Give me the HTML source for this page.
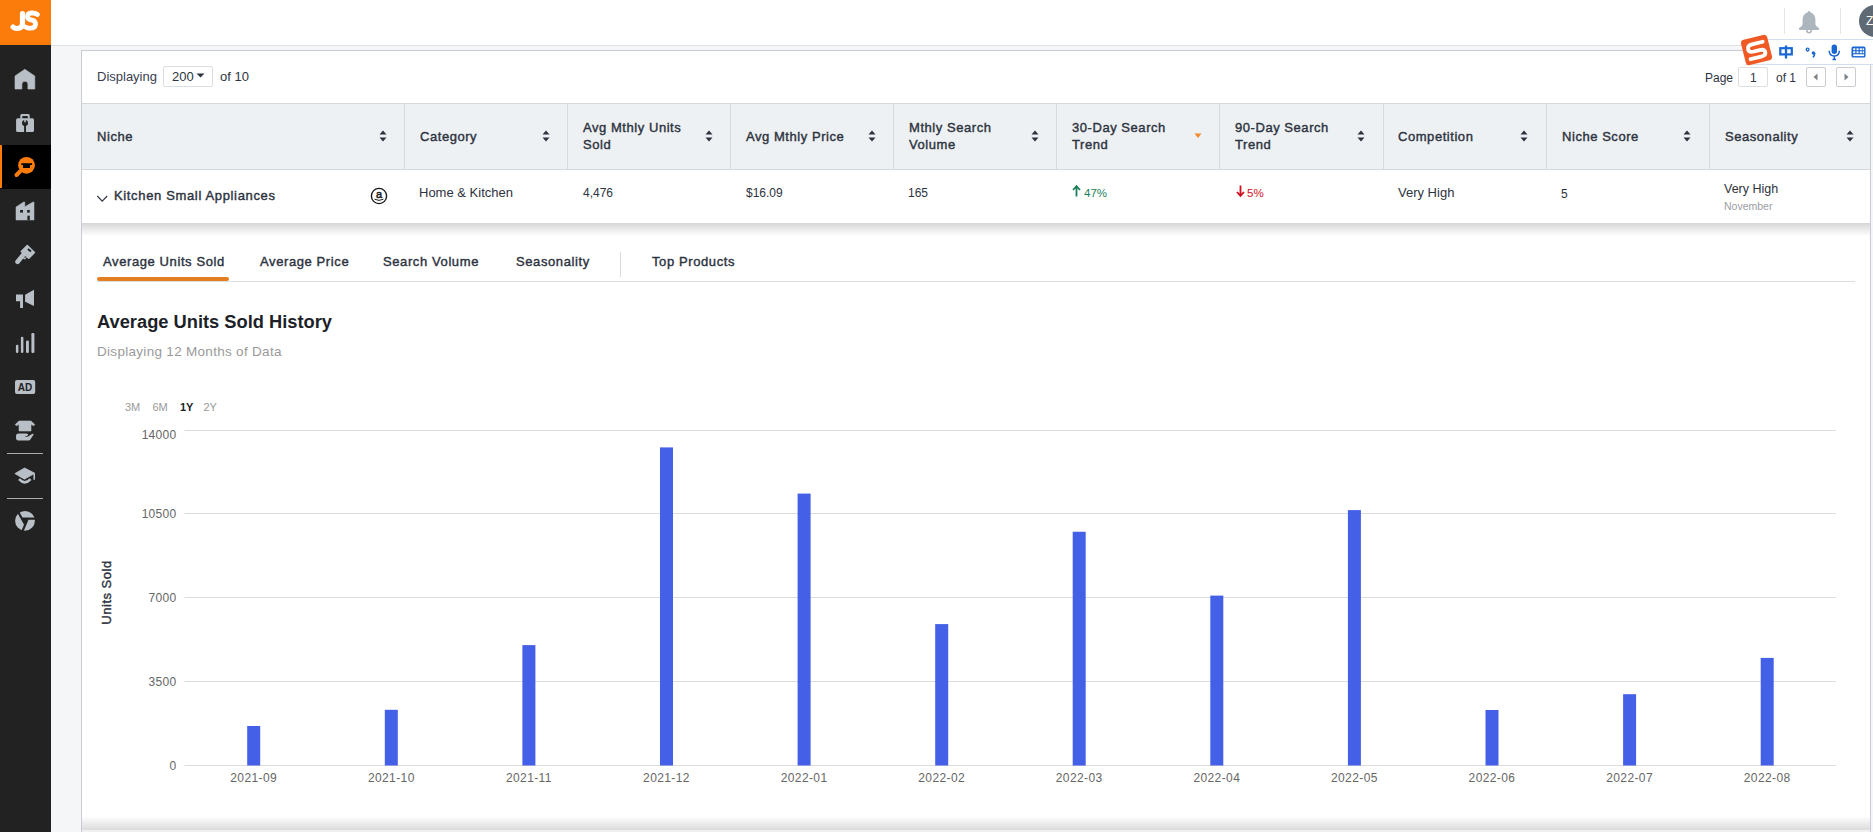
<!DOCTYPE html>
<html><head><meta charset="utf-8">
<style>
*{margin:0;padding:0;box-sizing:border-box}
html,body{width:1873px;height:832px;overflow:hidden;background:#f4f6f8;font-family:"Liberation Sans",sans-serif;color:#2b3140}
.A{position:absolute;white-space:nowrap}
.hd{position:absolute;font-size:13px;font-weight:400;-webkit-text-stroke:0.4px #2d3340;letter-spacing:0.55px;color:#2d3340;line-height:17px;white-space:nowrap}
.md{font-weight:400!important;-webkit-text-stroke:0.4px #2d3340;letter-spacing:0.6px}
.c{position:absolute;font-size:13px;color:#2d3340;white-space:nowrap;line-height:15px}
.vl{position:absolute;top:104px;width:1px;height:65px;background:#d8dbde}
svg{position:absolute;overflow:visible}
</style></head><body>

<div class="A" style="left:0;top:0;width:51px;height:832px;background:#222222"></div>
<div class="A" style="left:0;top:0;width:51px;height:45px;background:#fb7c0a"></div>
<svg style="left:0;top:0" width="51" height="45" viewBox="0 0 51 45"><path d="M22.5 13.5 V23.5 Q22.5 28.5 17 28.5 Q14.5 28.5 13 27" fill="none" stroke="#fff" stroke-width="5.2" stroke-linecap="round"/><path d="M37.5 14.5 Q35 12.8 31.5 13 Q27.5 13.2 27.5 16.5 Q27.5 19.3 32 20.2 Q35.5 21 35.5 24 Q35.5 28.2 30 28.2 Q27.5 28.2 25.5 27" fill="none" stroke="#fff" stroke-width="4.8" stroke-linecap="round" stroke-linejoin="round"/></svg>
<div class="A" style="left:0;top:145px;width:51px;height:44px;background:#000"></div>
<div class="A" style="left:0;top:145px;width:2px;height:43px;background:#fb7c0a"></div>
<svg style="left:0;top:0" width="51" height="560" viewBox="0 0 51 560"><path d="M24.8 69.3 L34.8 76 V89 H27.9 V84.3 A3 3 0 0 0 21.9 84.3 V89 H15 V76 Z" fill="#b8bfc6" stroke="#b8bfc6" stroke-width="0.6" stroke-linejoin="round"/><path d="M21.8 114 H28.2 Q29.7 114 29.7 115.5 V118.5 H27.8 V116 H22.3 V118.5 H20.3 V115.5 Q20.3 114 21.8 114Z" fill="#b8bfc6"/><rect x="16.1" y="118.3" width="17.9" height="13.7" rx="1.6" fill="#b8bfc6"/><circle cx="25" cy="123" r="3" fill="#222222"/><rect x="24.2" y="119.3" width="1.6" height="3" fill="#b8bfc6"/><rect x="24.1" y="124" width="1.9" height="8.2" fill="#222222"/><path d="M16 220 V207 L23.6 202 H24.8 V206.8 L33 202 H34 V220 Z" fill="#b8bfc6" stroke="#b8bfc6" stroke-width="0.5" stroke-linejoin="round"/><rect x="20.1" y="210" width="2.9" height="2.6" fill="#222222"/><rect x="27.1" y="210" width="2.7" height="2.6" fill="#222222"/><rect x="27.4" y="215.7" width="2.4" height="4.5" fill="#222222"/><path d="M27.3 245.6 L34.4 252.5 L28.75 258.2 L21.3 251.5 Z" fill="#b8bfc6" stroke="#b8bfc6" stroke-width="1.6" stroke-linejoin="round"/><path d="M23.5 254.5 L17.6 261.8" stroke="#b8bfc6" stroke-width="4.6" stroke-linecap="round"/><path d="M22 258 L25 259.6 L27 257.2 Z" fill="#b8bfc6"/><path d="M27.9 249 L31 251.6" stroke="#222222" stroke-width="1.9"/><path d="M16 294.5 H23 V308 H20.1 V301.3 H16 Z" fill="#b8bfc6"/><path d="M25.1 294.8 L34 289.8 V306 L25.1 301.7 Z" fill="#b8bfc6"/><rect x="15.9" y="344.8" width="2.5" height="8.2" rx="1.2" fill="#b8bfc6"/><rect x="20.9" y="336.8" width="2.5" height="16.2" rx="1.2" fill="#b8bfc6"/><rect x="26" y="340.6" width="2.9" height="12.4" rx="1.2" fill="#b8bfc6"/><rect x="31.4" y="333" width="3.0" height="20.0" rx="1.2" fill="#b8bfc6"/><rect x="15" y="380.1" width="20.2" height="13.9" rx="2" fill="#b8bfc6"/><text x="25.1" y="391" text-anchor="middle" font-family="Liberation Sans" font-weight="700" font-size="10" fill="#222222">AD</text><path d="M15.2 424.6 L19 421 H31 L34.8 424.6 L33.6 425.8 L31 424.2 V431 H19 V424.2 L16.4 425.8 Z" fill="#b8bfc6" stroke="#b8bfc6" stroke-width="0.6" stroke-linejoin="round"/><path d="M18.5 433.5 H26.5 Q28.6 433.6 27.8 435.6 L24.5 436.8 H27.6 L32 434 Q33.8 433.2 33.5 434.8 L30.2 439.8 Q29.7 440.4 28.8 440.4 H18.3 Q16 440.4 16 437.5 V436 Q16 433.5 18.5 433.5Z" fill="#b8bfc6"/><rect x="7" y="453" width="36" height="1" fill="#a9acb0"/><rect x="7" y="498" width="36" height="1" fill="#a9acb0"/><path d="M24.6 468 L34.9 473.3 L24.4 479.2 L14.9 473.6 Z" fill="#b8bfc6" stroke="#b8bfc6" stroke-width="0.8" stroke-linejoin="round"/><path d="M34.2 473.5 V479.8" stroke="#b8bfc6" stroke-width="1.6"/><path d="M19 479.2 Q24.8 485.5 30.6 479.2" fill="none" stroke="#b8bfc6" stroke-width="2.6"/><circle cx="25" cy="520.8" r="9.9" fill="#b8bfc6"/><path d="M21.9 518.6 H27.7 L25.1 524.2Z" fill="#222222"/><path d="M18.3 512.2 L25.3 524.8 M21.9 518.6 H35.5 M27.9 518.4 L22.4 531.2" stroke="#222222" stroke-width="2.2"/></svg>
<svg style="left:0;top:140px" width="51" height="50" viewBox="0 140 51 50"><circle cx="26.5" cy="165.3" r="8.4" fill="#fb7c0a"/><path d="M20 171.5 L16.5 175" stroke="#fb7c0a" stroke-width="4" stroke-linecap="round"/><path d="M21.3 163.3 H32 V165.1 H30 V168 H23 V165.1 H21.3Z" fill="#000"/></svg>
<div class="A" style="left:51px;top:0;width:1822px;height:46px;background:#fff;border-bottom:1px solid #dfe2e5"></div>
<div class="A" style="left:1784px;top:8px;width:1px;height:26px;background:#e3e5e8"></div>
<div class="A" style="left:1840px;top:8px;width:1px;height:26px;background:#e3e5e8"></div>
<svg style="left:1795px;top:8px" width="28" height="28" viewBox="1795 8 28 28"><path d="M1809 11 Q1810.3 11 1810.6 12.6 Q1815.3 14 1815.4 19.5 V24.2 Q1815.6 26 1817.5 27 Q1819.4 28 1819.2 29 Q1819 30 1817.5 30 H1800.5 Q1799 30 1798.8 29 Q1798.6 28 1800.5 27 Q1802.4 26 1802.6 24.2 V19.5 Q1802.7 14 1807.4 12.6 Q1807.7 11 1809 11Z" fill="#adb5bd"/><circle cx="1809" cy="30.6" r="2.2" fill="none" stroke="#adb5bd" stroke-width="1.6"/></svg>
<div class="A" style="left:1859px;top:5px;width:32px;height:32px;border-radius:50%;background:#5f6a75"></div>
<div class="A" style="left:1866px;top:14px;font-size:12px;color:#fff;line-height:14px">Z</div>
<div class="A" style="left:81px;top:50px;width:1790px;height:800px;background:#fff;border:1px solid #c9ccd0"></div>
<div class="c" style="left:97px;top:69px;color:#3a4050">Displaying</div>
<div class="A" style="left:163px;top:66px;width:50px;height:21px;border:1px solid #dcdfe2;border-radius:2px"></div>
<div class="c" style="left:172px;top:69px">200</div>
<svg style="left:196px;top:73px" width="9" height="5" viewBox="0 0 9 5"><path d="M0.5 0.5 H8.5 L4.5 4.5Z" fill="#2d3340"/></svg>
<div class="c" style="left:220px;top:69px">of 10</div>
<div class="c" style="left:1705px;top:71px;font-size:12px">Page</div>
<div class="A" style="left:1738px;top:67px;width:30px;height:20px;border:1px solid #dcdfe2;border-radius:2px"></div>
<div class="c" style="left:1750px;top:71px;font-size:12px">1</div>
<div class="c" style="left:1776px;top:71px;font-size:12px">of 1</div>
<div class="A" style="left:1806px;top:67px;width:20px;height:20px;border:1px solid #c9ccd0;border-radius:2px"></div>
<svg style="left:1813px;top:73px" width="5" height="8" viewBox="0 0 5 8"><path d="M4.5 0.5 V7.5 L0.5 4Z" fill="#7c8188"/></svg>
<div class="A" style="left:1836px;top:67px;width:20px;height:20px;border:1px solid #c9ccd0;border-radius:2px"></div>
<svg style="left:1844px;top:73px" width="5" height="8" viewBox="0 0 5 8"><path d="M0.5 0.5 V7.5 L4.5 4Z" fill="#7c8188"/></svg>
<div class="A" style="left:82px;top:103px;width:1788px;height:67px;background:#eef1f3;border-top:1px solid #d5d8db;border-bottom:1px solid #d5d8db"></div>
<div class="vl" style="left:404px"></div>
<div class="vl" style="left:567px"></div>
<div class="vl" style="left:730px"></div>
<div class="vl" style="left:893px"></div>
<div class="vl" style="left:1056px"></div>
<div class="vl" style="left:1219px"></div>
<div class="vl" style="left:1383px"></div>
<div class="vl" style="left:1546px"></div>
<div class="vl" style="left:1709px"></div>
<div class="hd" style="left:97px;top:128px">Niche</div>
<div class="hd" style="left:420px;top:128px">Category</div>
<div class="hd" style="left:583px;top:119px">Avg Mthly Units<br>Sold</div>
<div class="hd" style="left:746px;top:128px">Avg Mthly Price</div>
<div class="hd" style="left:909px;top:119px">Mthly Search<br>Volume</div>
<div class="hd" style="left:1072px;top:119px">30-Day Search<br>Trend</div>
<div class="hd" style="left:1235px;top:119px">90-Day Search<br>Trend</div>
<div class="hd" style="left:1398px;top:128px">Competition</div>
<div class="hd" style="left:1562px;top:128px">Niche Score</div>
<div class="hd" style="left:1725px;top:128px">Seasonality</div>
<svg style="left:379px;top:130px" width="8" height="12" viewBox="0 0 8 12"><path d="M4 0.5 L7.5 4.5 H0.5Z M4 11.5 L7.5 7.5 H0.5Z" fill="#2d3340"/></svg>
<svg style="left:542px;top:130px" width="8" height="12" viewBox="0 0 8 12"><path d="M4 0.5 L7.5 4.5 H0.5Z M4 11.5 L7.5 7.5 H0.5Z" fill="#2d3340"/></svg>
<svg style="left:705px;top:130px" width="8" height="12" viewBox="0 0 8 12"><path d="M4 0.5 L7.5 4.5 H0.5Z M4 11.5 L7.5 7.5 H0.5Z" fill="#2d3340"/></svg>
<svg style="left:868px;top:130px" width="8" height="12" viewBox="0 0 8 12"><path d="M4 0.5 L7.5 4.5 H0.5Z M4 11.5 L7.5 7.5 H0.5Z" fill="#2d3340"/></svg>
<svg style="left:1031px;top:130px" width="8" height="12" viewBox="0 0 8 12"><path d="M4 0.5 L7.5 4.5 H0.5Z M4 11.5 L7.5 7.5 H0.5Z" fill="#2d3340"/></svg>
<svg style="left:1357px;top:130px" width="8" height="12" viewBox="0 0 8 12"><path d="M4 0.5 L7.5 4.5 H0.5Z M4 11.5 L7.5 7.5 H0.5Z" fill="#2d3340"/></svg>
<svg style="left:1520px;top:130px" width="8" height="12" viewBox="0 0 8 12"><path d="M4 0.5 L7.5 4.5 H0.5Z M4 11.5 L7.5 7.5 H0.5Z" fill="#2d3340"/></svg>
<svg style="left:1683px;top:130px" width="8" height="12" viewBox="0 0 8 12"><path d="M4 0.5 L7.5 4.5 H0.5Z M4 11.5 L7.5 7.5 H0.5Z" fill="#2d3340"/></svg>
<svg style="left:1846px;top:130px" width="8" height="12" viewBox="0 0 8 12"><path d="M4 0.5 L7.5 4.5 H0.5Z M4 11.5 L7.5 7.5 H0.5Z" fill="#2d3340"/></svg>
<svg style="left:1194px;top:133px" width="8" height="6" viewBox="0 0 8 6"><path d="M0.5 0.5 H7.5 L4 5Z" fill="#f0892c"/></svg>
<svg style="left:96px;top:195px" width="12" height="8" viewBox="0 0 12 8"><path d="M1.3 1 L6.2 6.2 L11.2 1" fill="none" stroke="#2d3340" stroke-width="1.1"/></svg>
<div class="c md" style="left:114px;top:188px;letter-spacing:0.65px">Kitchen Small Appliances</div>
<svg style="left:370px;top:187px" width="18" height="18" viewBox="0 0 18 18"><circle cx="9" cy="9" r="7.6" fill="none" stroke="#1a1a1a" stroke-width="1.4"/><text x="9" y="10.8" text-anchor="middle" font-family="Liberation Sans" font-weight="400" stroke="#1a1a1a" stroke-width="0.5" font-size="11" fill="#1a1a1a">a</text><path d="M4.6 12.2 Q9 14.6 13.4 12.2" fill="none" stroke="#1a1a1a" stroke-width="1"/></svg>
<div class="c" style="left:419px;top:185px">Home &amp; Kitchen</div>
<div class="c" style="left:583px;top:186px;font-size:12px">4,476</div>
<div class="c" style="left:746px;top:186px;font-size:12px">$16.09</div>
<div class="c" style="left:908px;top:186px;font-size:12px">165</div>
<svg style="left:1072px;top:185px" width="9" height="12" viewBox="0 0 9 12"><path d="M4.5 11.5 V1.5 M1 5 L4.5 1.2 L8 5" fill="none" stroke="#1b7f5a" stroke-width="1.8"/></svg>
<div class="c" style="left:1084px;top:186px;font-size:11.5px;color:#1b7f5a">47%</div>
<svg style="left:1236px;top:185px" width="9" height="12" viewBox="0 0 9 12"><path d="M4.5 0.5 V10.5 M1 7 L4.5 10.8 L8 7" fill="none" stroke="#d0101e" stroke-width="1.8"/></svg>
<div class="c" style="left:1247px;top:186px;font-size:11.5px;color:#d0101e">5%</div>
<div class="c" style="left:1398px;top:185px">Very High</div>
<div class="c" style="left:1561px;top:187px;font-size:12px">5</div>
<div class="c" style="left:1724px;top:182px;font-size:12.5px">Very High</div>
<div class="c" style="left:1724px;top:199px;font-size:10.5px;color:#9a9ea4">November</div>
<div class="A" style="left:82px;top:223px;width:1788px;height:13px;background:linear-gradient(#d6d6d6,#fff)"></div>
<div class="c md" style="left:103px;top:254px;color:#2d3340">Average Units Sold</div>
<div class="c md" style="left:260px;top:254px;color:#2d3340">Average Price</div>
<div class="c md" style="left:383px;top:254px;color:#2d3340">Search Volume</div>
<div class="c md" style="left:516px;top:254px;color:#2d3340">Seasonality</div>
<div class="c md" style="left:652px;top:254px;color:#2d3340">Top Products</div>
<div class="A" style="left:620px;top:252px;width:1px;height:25px;background:#d8dbde"></div>
<div class="A" style="left:97px;top:281px;width:1758px;height:1px;background:#dcdfe2"></div>
<div class="A" style="left:97px;top:277px;width:132px;height:4px;border-radius:2px;background:#e27d20"></div>
<div class="A" style="left:97px;top:311px;font-size:18.3px;font-weight:700;color:#1d1f29;line-height:21px">Average Units Sold History</div>
<div class="A" style="left:97px;top:344px;font-size:13.5px;color:#9a9a9a;line-height:15px;letter-spacing:0.3px">Displaying 12 Months of Data</div>
<div class="A" style="left:125px;top:401px;font-size:11px;line-height:13px;color:#9a9a9a">3M</div>
<div class="A" style="left:152.5px;top:401px;font-size:11px;line-height:13px;color:#9a9a9a">6M</div>
<div class="A" style="left:180px;top:401px;font-size:11px;line-height:13px;font-weight:700;color:#1d1f29">1Y</div>
<div class="A" style="left:203.5px;top:401px;font-size:11px;line-height:13px;color:#9a9a9a">2Y</div>
<svg style="left:0;top:0" width="1873" height="832" viewBox="0 0 1873 832"><line x1="184.5" y1="765.5" x2="1836" y2="765.5" stroke="#dcdcdc" stroke-width="1"/><text x="176.5" y="769.5" text-anchor="end" font-family="Liberation Sans" font-size="12" letter-spacing="0.3" fill="#666">0</text><line x1="184.5" y1="681.5" x2="1836" y2="681.5" stroke="#dcdcdc" stroke-width="1"/><text x="176.5" y="685.5" text-anchor="end" font-family="Liberation Sans" font-size="12" letter-spacing="0.3" fill="#666">3500</text><line x1="184.5" y1="597.5" x2="1836" y2="597.5" stroke="#dcdcdc" stroke-width="1"/><text x="176.5" y="601.5" text-anchor="end" font-family="Liberation Sans" font-size="12" letter-spacing="0.3" fill="#666">7000</text><line x1="184.5" y1="513.5" x2="1836" y2="513.5" stroke="#dcdcdc" stroke-width="1"/><text x="176.5" y="517.5" text-anchor="end" font-family="Liberation Sans" font-size="12" letter-spacing="0.3" fill="#666">10500</text><line x1="184.5" y1="430.5" x2="1836" y2="430.5" stroke="#dcdcdc" stroke-width="1"/><text x="176.5" y="439" text-anchor="end" font-family="Liberation Sans" font-size="12" letter-spacing="0.3" fill="#666">14000</text><rect x="247.2" y="726" width="13" height="39.5" fill="#4460e6"/><text x="253.7" y="782" text-anchor="middle" font-family="Liberation Sans" font-size="12" letter-spacing="0.4" fill="#666">2021-09</text><rect x="384.8" y="709.8" width="13" height="55.7" fill="#4460e6"/><text x="391.3" y="782" text-anchor="middle" font-family="Liberation Sans" font-size="12" letter-spacing="0.4" fill="#666">2021-10</text><rect x="522.4" y="645.1" width="13" height="120.4" fill="#4460e6"/><text x="528.9" y="782" text-anchor="middle" font-family="Liberation Sans" font-size="12" letter-spacing="0.4" fill="#666">2021-11</text><rect x="660.0" y="447.4" width="13" height="318.1" fill="#4460e6"/><text x="666.5" y="782" text-anchor="middle" font-family="Liberation Sans" font-size="12" letter-spacing="0.4" fill="#666">2021-12</text><rect x="797.6" y="493.6" width="13" height="271.9" fill="#4460e6"/><text x="804.1" y="782" text-anchor="middle" font-family="Liberation Sans" font-size="12" letter-spacing="0.4" fill="#666">2022-01</text><rect x="935.2" y="624.1" width="13" height="141.4" fill="#4460e6"/><text x="941.7" y="782" text-anchor="middle" font-family="Liberation Sans" font-size="12" letter-spacing="0.4" fill="#666">2022-02</text><rect x="1072.7" y="531.75" width="13" height="233.8" fill="#4460e6"/><text x="1079.2" y="782" text-anchor="middle" font-family="Liberation Sans" font-size="12" letter-spacing="0.4" fill="#666">2022-03</text><rect x="1210.3" y="595.6" width="13" height="169.9" fill="#4460e6"/><text x="1216.8" y="782" text-anchor="middle" font-family="Liberation Sans" font-size="12" letter-spacing="0.4" fill="#666">2022-04</text><rect x="1347.9" y="510.1" width="13" height="255.4" fill="#4460e6"/><text x="1354.4" y="782" text-anchor="middle" font-family="Liberation Sans" font-size="12" letter-spacing="0.4" fill="#666">2022-05</text><rect x="1485.5" y="710" width="13" height="55.5" fill="#4460e6"/><text x="1492.0" y="782" text-anchor="middle" font-family="Liberation Sans" font-size="12" letter-spacing="0.4" fill="#666">2022-06</text><rect x="1623.1" y="694.2" width="13" height="71.3" fill="#4460e6"/><text x="1629.6" y="782" text-anchor="middle" font-family="Liberation Sans" font-size="12" letter-spacing="0.4" fill="#666">2022-07</text><rect x="1760.7" y="657.9" width="13" height="107.6" fill="#4460e6"/><text x="1767.2" y="782" text-anchor="middle" font-family="Liberation Sans" font-size="12" letter-spacing="0.4" fill="#666">2022-08</text><text transform="translate(111,592.5) rotate(-90)" text-anchor="middle" font-family="Liberation Sans" font-weight="400" font-size="13" stroke="#2d3340" stroke-width="0.4" letter-spacing="0.5" fill="#2d3340">Units Sold</text></svg>
<div class="A" style="left:82px;top:816px;width:1788px;height:14px;background:linear-gradient(#fff,#dcdcdc)"></div>
<div class="A" style="left:82px;top:830px;width:1788px;height:2px;background:#f0f0f0"></div>
<div class="A" style="left:1766px;top:39px;width:107px;height:26px;background:rgba(255,255,255,0.95);border-top:1px solid #cfdff0;border-bottom:1px solid #cfdff0"></div>
<div class="A" style="left:1745px;top:64px;width:22px;height:1px;background:#d6e4f3"></div>
<svg style="left:1740px;top:34px" width="34" height="32" viewBox="0 0 34 32"><g transform="rotate(-14 16.5 16)"><rect x="3" y="3" width="27" height="26" rx="3.5" fill="#ef5a24"/><path d="M24.5 9.5 H13.5 Q8.5 9.5 8.5 13.5 Q8.5 16.8 13.5 16.8 H19.5 Q24.5 16.8 24.5 20.3 Q24.5 23.5 19.5 23.5 H8.5" fill="none" stroke="#fff" stroke-width="3.8" stroke-linecap="round"/></g></svg>
<svg style="left:1770px;top:40px" width="103" height="24" viewBox="1770 40 103 24"><rect x="1780.3" y="48.2" width="11.5" height="6.2" fill="none" stroke="#1967d2" stroke-width="2.2"/><path d="M1786 45.5 V58.5" stroke="#1967d2" stroke-width="2.3"/><circle cx="1807.6" cy="49.6" r="1.4" fill="none" stroke="#1967d2" stroke-width="1.3"/><circle cx="1813.4" cy="53" r="1.7" fill="#1967d2"/><path d="M1814.8 53 Q1814.8 56 1812.8 57.3" stroke="#1967d2" stroke-width="1.5" fill="none"/><rect x="1831.6" y="44.4" width="5.4" height="9.6" rx="2.7" fill="#1967d2"/><path d="M1829.2 50.8 Q1829.2 56 1834.3 56 Q1839.3 56 1839.3 50.8 M1834.3 56 V59.3 M1832.5 59.5 H1836" stroke="#1967d2" stroke-width="1.5" fill="none"/><rect x="1851.5" y="46.5" width="14" height="11" rx="1.6" fill="#1967d2"/><g fill="#fff"><rect x="1853.2" y="48.3" width="2.1" height="1.9"/><rect x="1856.5" y="48.3" width="2.1" height="1.9"/><rect x="1859.8" y="48.3" width="2.1" height="1.9"/><rect x="1862.6" y="48.3" width="1.5" height="1.9"/><rect x="1853.2" y="51.3" width="2.1" height="1.9"/><rect x="1856.5" y="51.3" width="2.1" height="1.9"/><rect x="1859.8" y="51.3" width="2.1" height="1.9"/><rect x="1862.6" y="51.3" width="1.5" height="1.9"/><rect x="1853.2" y="54.3" width="10.9" height="1.8"/></g></svg>
</body></html>
